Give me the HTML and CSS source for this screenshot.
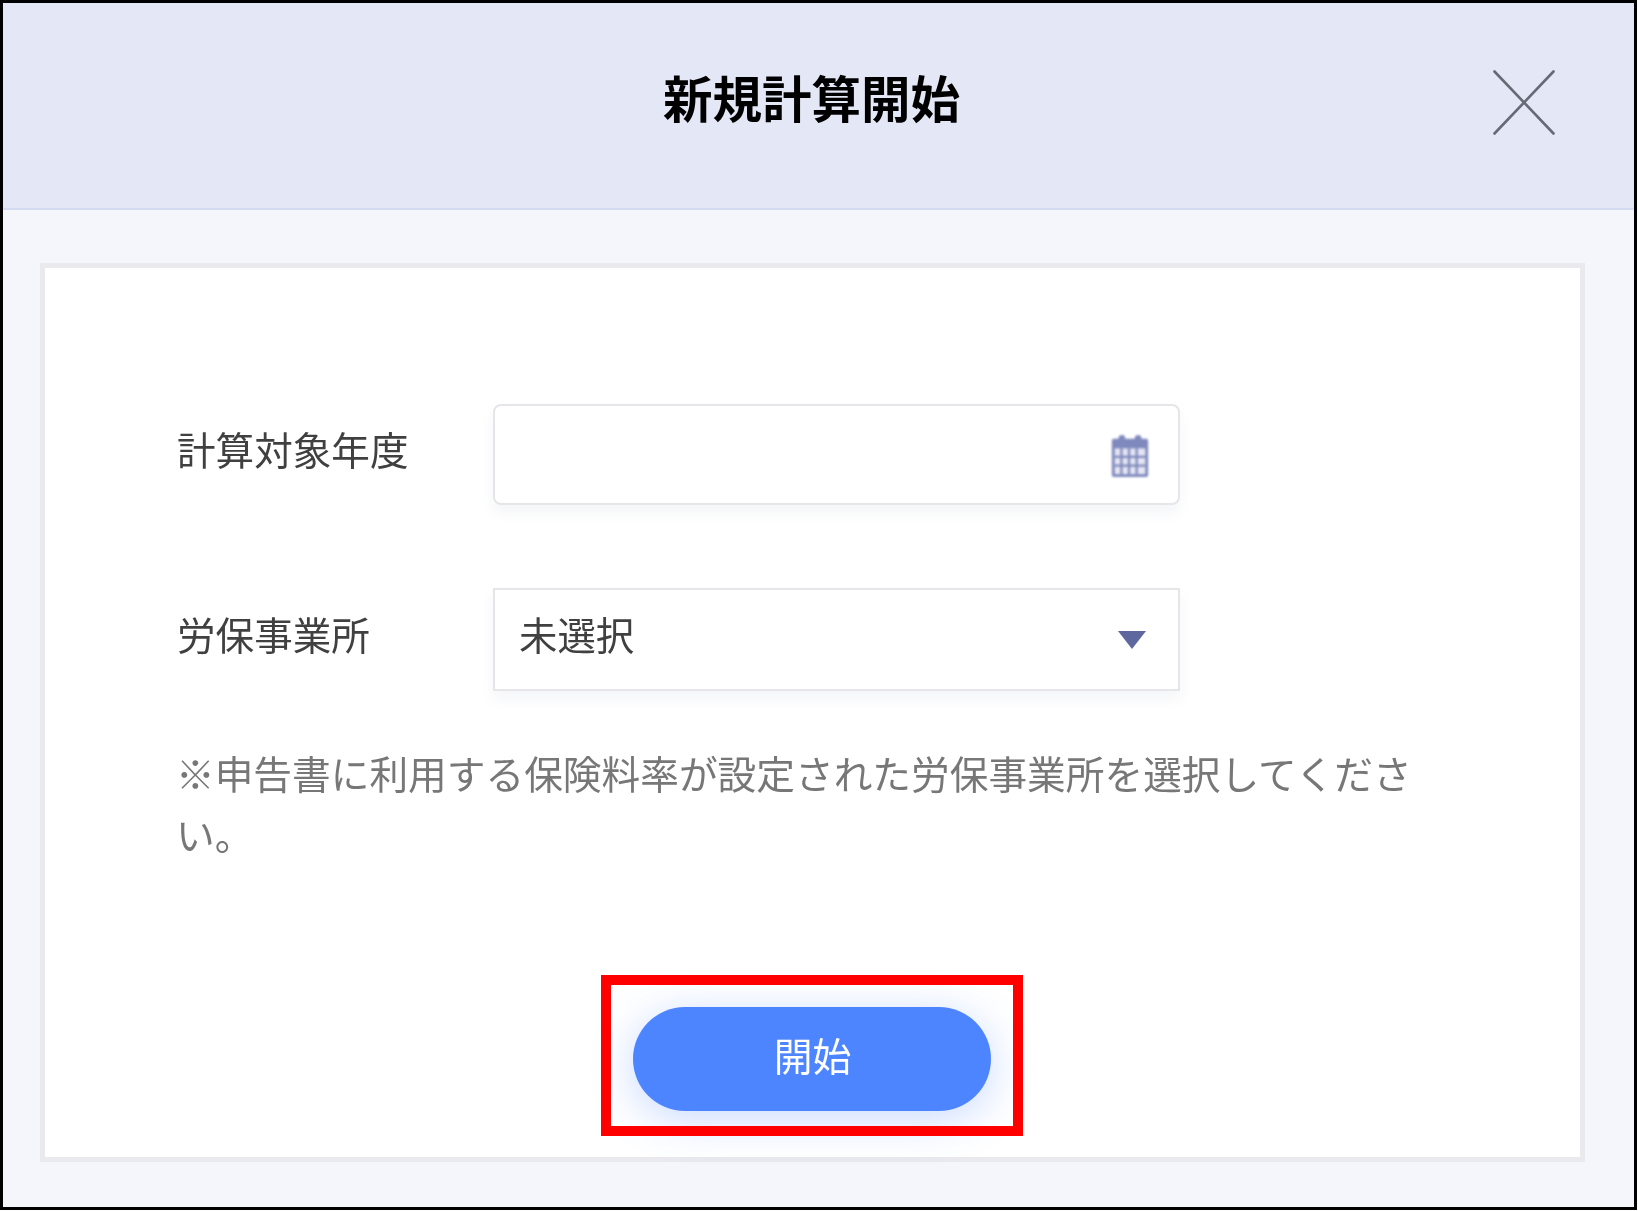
FILE: index.html
```html
<!DOCTYPE html>
<html lang="ja">
<head>
  <meta charset="UTF-8">
  <title>新規計算開始</title>
  <link rel="stylesheet" href="styles.css">
</head>
<body>
  <div class="dialog">
    <!-- Header -->
    <div class="dialog-header">
      <h1 class="dialog-title">新規計算開始</h1>
      <svg class="close-icon" viewBox="0 0 62 65" aria-label="閉じる">
        <path d="M1.5 1.5 L60.5 63.5 M60.5 1.5 L1.5 63.5" fill="none" stroke="#666a75" stroke-width="2.6" stroke-linecap="round"/>
      </svg>
    </div>

    <div class="dialog-body">
      <div class="card">
        <!-- Form rows -->
        <div class="form-row">
          <span class="form-label">計算対象年度</span>
          <div class="field field-date">
            <svg class="calendar-icon" viewBox="0 0 38 44">
              <rect x="7" y="0" width="7" height="8" rx="3.5" fill="#8089bd"/>
              <rect x="24" y="0" width="7" height="8" rx="3.5" fill="#8089bd"/>
              <rect x="0" y="4" width="38" height="40" rx="2" fill="#8089bd"/>
              <rect x="3" y="14" width="32" height="27" fill="#e3e5f2"/>
              <path d="M10 14 V41 M18 14 V41 M26 14 V41 M3 23 H35 M3 32 H35" stroke="#8089bd" stroke-width="2.4"/>
            </svg>
          </div>
        </div>
        <div class="form-row form-row-select">
          <span class="form-label">労保事業所</span>
          <div class="field field-select">
            <span class="select-value">未選択</span>
            <span class="select-arrow"></span>
          </div>
        </div>

        <p class="note">※申告書に利用する保険料率が設定された労保事業所を選択してください。</p>

        <!-- Start button, with the red annotation frame over it -->
        <div class="actions">
          <div class="button-frame">
            <button class="start-button"><span class="button-text">開始</span></button>
          </div>
        </div>
      </div>
    </div>
  </div>
</body>
</html>
```

FILE: styles.css
```css
body {
  margin: 0;
  background-color: white;
  font-family: "Noto Sans CJK JP", "Noto Sans", sans-serif;
}

/* Dialog shell */
.dialog {
  box-sizing: border-box;
  width: 1637px;
  height: 1210px;
  border: 3px solid #000;
  display: flex;
  flex-direction: column;
  background-color: #f4f6fb;
}

.dialog-header {
  box-sizing: border-box;
  height: 207px;
  flex-shrink: 0;
  background-color: #e4e8f6;
  border-bottom: 2px solid #d5dbf1;
  display: flex;
  justify-content: center;
  align-items: center;
  position: relative;
}

.dialog-title {
  margin: 0 14px 18px 0;
  font-size: 49.5px;
  font-weight: 700;
  color: #000;
  line-height: 1.4;
  filter: blur(0.7px);
}

.close-icon {
  position: absolute;
  top: 67px;
  right: 79px;
  width: 62px;
  height: 65px;
  filter: blur(0.6px);
}

.dialog-body {
  flex: 1;
  padding: 53px 49px 0 37px;
}

/* White card */
.card {
  box-sizing: border-box;
  height: 899px;
  border: 5px solid #e9e9ee;
  background-color: white;
  padding: 136px 133px 0 131px;
}

.form-row {
  display: flex;
  align-items: center;
}

.form-row-select {
  margin-top: 83px;
}

.form-label {
  width: 317px;
  flex-shrink: 0;
  padding-left: 1px;
  box-sizing: border-box;
  font-size: 38.6px;
  color: #404040;
  line-height: 1;
  margin-bottom: 12px;
  filter: blur(0.7px);
}

.field {
  box-sizing: border-box;
  width: 687px;
  height: 101px;
  border: 2px solid #e6e6ea;
  background-color: white;
  box-shadow: 0 8px 14px rgba(40, 50, 90, 0.05);
  display: flex;
  align-items: center;
  justify-content: space-between;
}

.field-date {
  border-radius: 8px;
  justify-content: flex-end;
  padding-right: 29px;
}

.calendar-icon {
  width: 38px;
  height: 42px;
  margin-top: 2px;
  filter: blur(0.8px);
}

.field-select {
  height: 103px;
  padding: 0 32px 0 24px;
}

.select-value {
  font-size: 38.4px;
  color: #404040;
  line-height: 1;
  margin-bottom: 12px;
  filter: blur(0.7px);
}

/* Dropdown triangle */
.select-arrow {
  width: 0;
  height: 0;
  border-left: 14px solid transparent;
  border-right: 14px solid transparent;
  border-top: 18px solid #5f679f;
  filter: blur(0.5px);
}

.note {
  width: 1245px;
  margin: 51px 0 0;
  font-size: 38.7px;
  line-height: 61px;
  color: #777;
  filter: blur(0.7px);
}

.actions {
  display: flex;
  justify-content: center;
  margin-top: 143px;
}

.button-frame {
  position: relative;
}

.start-button {
  display: block;
  width: 358px;
  height: 104px;
  border: none;
  border-radius: 52px;
  background-color: #4d84ff;
  color: white;
  font-family: inherit;
  font-size: 38.8px;
  line-height: 1;
  padding: 0 0 10px 2px;
  box-shadow: 0 8px 44px rgba(77, 132, 255, 0.3);
}

.button-text {
  display: inline-block;
  filter: blur(0.6px);
}

/* Red annotation frame */
.button-frame::after {
  content: "";
  position: absolute;
  top: -32px;
  left: -32px;
  right: -32px;
  bottom: -25px;
  border: 10px solid #f00;
}
```
